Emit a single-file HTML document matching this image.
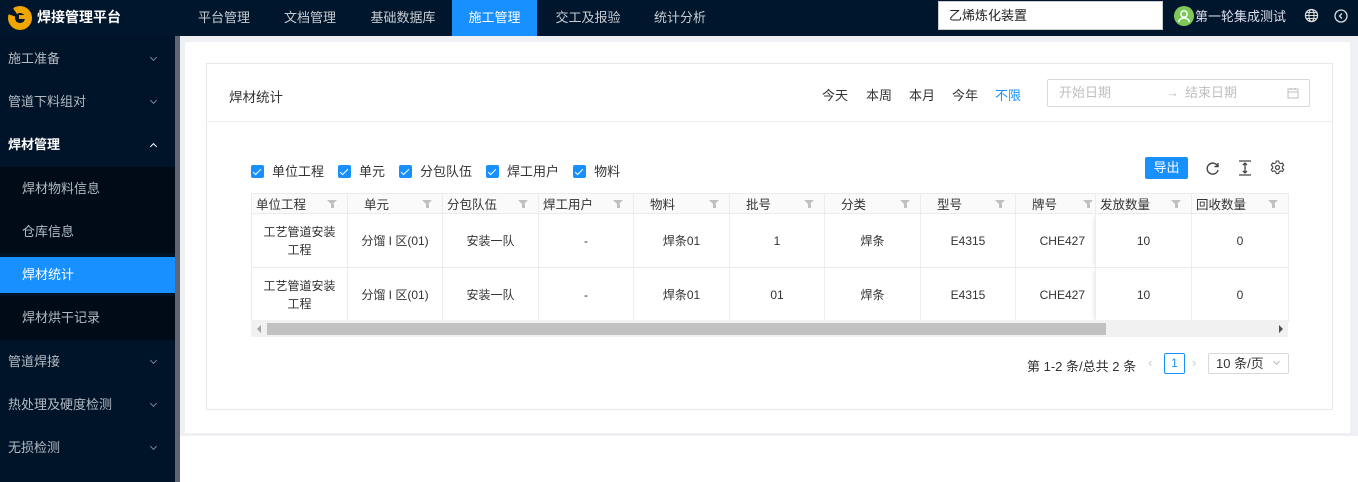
<!DOCTYPE html>
<html><head><meta charset="utf-8"><style>
*{box-sizing:border-box;margin:0;padding:0}
body{width:1358px;height:482px;overflow:hidden;background:#fff;font-family:"Liberation Sans","Noto Sans CJK SC",sans-serif;font-size:13px;color:#333;position:relative}
.top{position:absolute;left:0;top:0;width:1358px;height:36px;background:#00162c}
.abs{position:absolute}
.nav{position:absolute;top:0;height:36px;line-height:36px;color:#c8ccd2;font-size:13px;text-align:center}
.side{position:absolute;left:0;top:36px;width:175px;height:446px;background:#001429}
.sb{position:absolute;left:175px;top:36px;width:5px;height:446px;background:#5d6672}
.mi{position:absolute;left:0;width:175px;height:43px;line-height:43px;padding-left:8px;color:#b4bac2;font-size:13px}
.mi .ar{position:absolute;right:19px;top:18px;width:5px;height:5px;border:solid #7a8590;border-width:0 1px 1px 0;transform:rotate(45deg)}
.mi .up{top:21px;transform:rotate(-135deg);border-color:#fff}
.sub{background:#000b18;padding-left:22px}
.grey{position:absolute;left:180px;top:36px;width:1178px;height:400px;background:#eef0f3}
.panel{position:absolute;left:185px;top:42px;width:1165px;height:391px;background:#fff}
.card{position:absolute;left:206px;top:63px;width:1127px;height:347px;border:1px solid #e8e8e8;background:#fff}
.cb{display:inline-block;width:13px;height:13px;background:#1890ff;border-radius:2px;vertical-align:-2px;margin-right:8px;position:relative}
.cb:after{content:"";position:absolute;left:4px;top:1.5px;width:3px;height:7px;border:solid #fff;border-width:0 1.5px 1.5px 0;transform:rotate(45deg)}
table{border-collapse:collapse;position:absolute;left:251px;top:193px;table-layout:fixed}
td,th{border:1px solid #ececec;font-weight:normal;font-size:12px;text-align:center;color:#333}
th{height:20px;background:#fafafa;position:relative;font-size:12.5px;text-align:left;padding-left:16px}
th.l{padding-left:4px}
td{height:54px;line-height:18px}
.f{position:absolute;right:10px;top:6px;width:0;height:0;border-left:5px solid transparent;border-right:5px solid transparent;border-top:5px solid #bfbfbf}
.f:after{content:"";position:absolute;left:-1.5px;top:-1px;width:3px;height:4px;background:#bfbfbf}
</style></head><body>
<div class="top"></div>
<div class="abs" style="left:8px;top:6px;width:24px;height:24px;border-radius:50%;background:radial-gradient(circle at 50% 50%,#00162c 0 5px,transparent 5px),conic-gradient(#f0a500 0 80%,#00162c 80% 90%,#f0a500 90%)"></div>
<div class="abs" style="left:19px;top:15px;width:8px;height:4px;background:#f0a500"></div>
<div class="abs" style="left:37px;top:0;line-height:34px;color:#fff;font-size:14px;font-weight:bold">焊接管理平台</div>
<div class="nav" style="left:185px;width:78px">平台管理</div>
<div class="nav" style="left:270px;width:80px">文档管理</div>
<div class="nav" style="left:355px;width:96px">基础数据库</div>
<div class="nav" style="left:452px;width:85px;background:#1890ff;color:#fff">施工管理</div>
<div class="nav" style="left:542px;width:92px">交工及报验</div>
<div class="nav" style="left:640px;width:80px">统计分析</div>
<div class="abs" style="left:938px;top:1px;width:225px;height:29px;background:#fff;border:1px solid #ccc;padding-left:10px;line-height:27px;font-size:13px;color:#222">乙烯炼化装置</div>
<div class="abs" style="left:1174px;top:6px;width:20px;height:20px;border-radius:50%;background:#7ec85a"><svg width="20" height="20"><circle cx="10" cy="8" r="3.2" fill="none" stroke="#fff" stroke-width="1.4"/><path d="M4.5 16c1-3 3-4 5.5-4s4.5 1 5.5 4" fill="none" stroke="#fff" stroke-width="1.4"/></svg></div>
<div class="abs" style="left:1195px;top:0;line-height:33px;color:#dde;font-size:13px">第一轮集成测试</div>
<svg class="abs" style="left:1304px;top:8px" width="15" height="15"><circle cx="7.5" cy="7.5" r="6" fill="none" stroke="#ddd" stroke-width="1.3"/><ellipse cx="7.5" cy="7.5" rx="2.6" ry="6" fill="none" stroke="#ddd" stroke-width="1.1"/><path d="M1.5 7.5h12M2.5 4.5h10M2.5 10.5h10" stroke="#ddd" stroke-width="1"/></svg>
<svg class="abs" style="left:1334px;top:9px" width="14" height="14"><circle cx="7" cy="7" r="6" fill="none" stroke="#ddd" stroke-width="1.3"/><path d="M8 4.5L5.5 7L8 9.5" fill="none" stroke="#ddd" stroke-width="1.3"/></svg>

<div class="side"></div>
<div class="sb"></div>
<div class="mi" style="top:37px">施工准备<span class="ar"></span></div>
<div class="mi" style="top:80px">管道下料组对<span class="ar"></span></div>
<div class="mi" style="top:123px;color:#fff;font-weight:bold">焊材管理<span class="ar up"></span></div>
<div class="mi sub" style="top:167px">焊材物料信息</div>
<div class="mi sub" style="top:210px">仓库信息</div>
<div class="mi sub" style="top:257px;height:36px;line-height:36px;background:#1890ff;color:#fff">焊材统计</div>
<div class="mi sub" style="top:296px;height:44px">焊材烘干记录</div>
<div class="mi" style="top:340px">管道焊接<span class="ar"></span></div>
<div class="mi" style="top:383px">热处理及硬度检测<span class="ar"></span></div>
<div class="mi" style="top:426px">无损检测<span class="ar"></span></div>

<div class="grey"></div>
<div class="panel"></div>
<div class="card">
 <div class="abs" style="left:-1px;top:57px;width:1127px;border-top:1px solid #eee"></div>
</div>
<div class="abs" style="left:229px;top:86px;font-size:13.5px;color:#333">焊材统计</div>
<div class="abs" style="left:822px;top:85px;font-size:13px;color:#333">今天</div>
<div class="abs" style="left:866px;top:85px;font-size:13px">本周</div>
<div class="abs" style="left:909px;top:85px;font-size:13px">本月</div>
<div class="abs" style="left:952px;top:85px;font-size:13px">今年</div>
<div class="abs" style="left:995px;top:85px;font-size:13px;color:#1890ff">不限</div>
<div class="abs" style="left:1047px;top:79px;width:263px;height:28px;border:1px solid #d9d9d9;border-radius:2px;color:#bfbfbf;font-size:13px;line-height:26px">
 <span class="abs" style="left:11px">开始日期</span><span class="abs" style="left:118px">→</span><span class="abs" style="left:137px">结束日期</span>
 <svg class="abs" style="left:239px;top:7px" width="12" height="12"><rect x="1" y="2" width="10" height="9" fill="none" stroke="#bfbfbf"/><path d="M1 5h10M4 1v2M8 1v2" stroke="#bfbfbf"/></svg>
</div>
<div class="abs" style="left:251px;top:161px;font-size:13px;color:#333"><span class="cb"></span>单位工程<span style="margin-left:14px"></span><span class="cb"></span>单元<span style="margin-left:14px"></span><span class="cb"></span>分包队伍<span style="margin-left:14px"></span><span class="cb"></span>焊工用户<span style="margin-left:14px"></span><span class="cb"></span>物料</div>
<div class="abs" style="left:1145px;top:157px;width:43px;height:22px;background:#1890ff;color:#fff;text-align:center;line-height:22px;font-size:13px;border-radius:2px">导出</div>
<svg class="abs" style="left:1205px;top:161px" width="15" height="15"><path d="M12.5 5A5.5 5.5 0 1 0 13 9" fill="none" stroke="#444" stroke-width="1.4"/><path d="M13 2v3.5h-3.5" fill="none" stroke="#444" stroke-width="1.4"/></svg>
<svg class="abs" style="left:1238px;top:160px" width="14" height="16"><path d="M1 1h12M1 15h12M7 3v10M5 5l2-2 2 2M5 11l2 2 2-2" fill="none" stroke="#444" stroke-width="1.3"/></svg>
<svg class="abs" style="left:1270px;top:160px" width="15" height="15"><circle cx="7.5" cy="7.5" r="2" fill="none" stroke="#444" stroke-width="1.2"/><path d="M6.3 1h2.4l.4 1.8 1.6.9 1.8-.6 1.2 2.1-1.4 1.2v1.8l1.4 1.2-1.2 2.1-1.8-.6-1.6.9-.4 1.8H6.3l-.4-1.8-1.6-.9-1.8.6-1.2-2.1 1.4-1.2V6.4L1.3 5.2l1.2-2.1 1.8.6 1.6-.9z" fill="none" stroke="#444" stroke-width="1.1"/></svg>

<table>
<colgroup><col width="96"><col width="95"><col width="96"><col width="95"><col width="96"><col width="95"><col width="96"><col width="95"><col width="80"><col width="96"><col width="97"></colgroup>
<tr><th class="l">单位工程<i class="f"></i></th><th>单元<i class="f"></i></th><th class="l">分包队伍<i class="f"></i></th><th class="l">焊工用户<i class="f"></i></th><th>物料<i class="f"></i></th><th>批号<i class="f"></i></th><th>分类<i class="f"></i></th><th>型号<i class="f"></i></th><th>牌号<i class="f" style="right:2px"></i></th><th class="l" style="box-shadow:-4px 0 5px -3px rgba(0,0,0,.15)">发放数量<i class="f"></i></th><th class="l">回收数量<i class="f"></i></th></tr>
<tr><td>工艺管道安装<br>工程</td><td>分馏 I 区(01)</td><td>安装一队</td><td>-</td><td>焊条01</td><td>1</td><td>焊条</td><td>E4315</td><td style="text-align:right;padding-right:10px">CHE427</td><td style="box-shadow:-4px 0 5px -3px rgba(0,0,0,.15)">10</td><td>0</td></tr>
<tr><td>工艺管道安装<br>工程</td><td>分馏 I 区(01)</td><td>安装一队</td><td>-</td><td>焊条01</td><td>01</td><td>焊条</td><td>E4315</td><td style="text-align:right;padding-right:10px">CHE427</td><td style="box-shadow:-4px 0 5px -3px rgba(0,0,0,.15)">10</td><td>0</td></tr>
</table>
<div class="abs" style="left:251px;top:320px;width:1037px;height:17px;background:#f1f1f1"></div>
<div class="abs" style="left:267px;top:323px;width:839px;height:12px;background:#c1c1c1"></div>
<div class="abs" style="left:257px;top:325px;width:0;height:0;border-top:4px solid transparent;border-bottom:4px solid transparent;border-right:4px solid #a3a3a3"></div>
<div class="abs" style="left:1279px;top:325px;width:0;height:0;border-top:4px solid transparent;border-bottom:4px solid transparent;border-left:4px solid #505050"></div>

<div class="abs" style="left:1027px;top:356px;font-size:13px;color:#333">第 1-2 条/总共 2 条</div>
<div class="abs" style="left:1148px;top:355px;color:#ccc;font-size:13px">‹</div>
<div class="abs" style="left:1164px;top:353px;width:21px;height:21px;border:1px solid #1890ff;color:#1890ff;text-align:center;line-height:19px;font-size:12px;border-radius:2px">1</div>
<div class="abs" style="left:1192px;top:355px;color:#ccc;font-size:13px">›</div>
<div class="abs" style="left:1208px;top:353px;width:81px;height:21px;border:1px solid #d9d9d9;border-radius:2px;font-size:13px;line-height:19px;padding-left:7px;color:#333">10 条/页<span style="position:absolute;right:9px;top:5px;width:5px;height:5px;border:solid #bbb;border-width:0 1px 1px 0;transform:rotate(45deg)"></span></div>
</body></html>
